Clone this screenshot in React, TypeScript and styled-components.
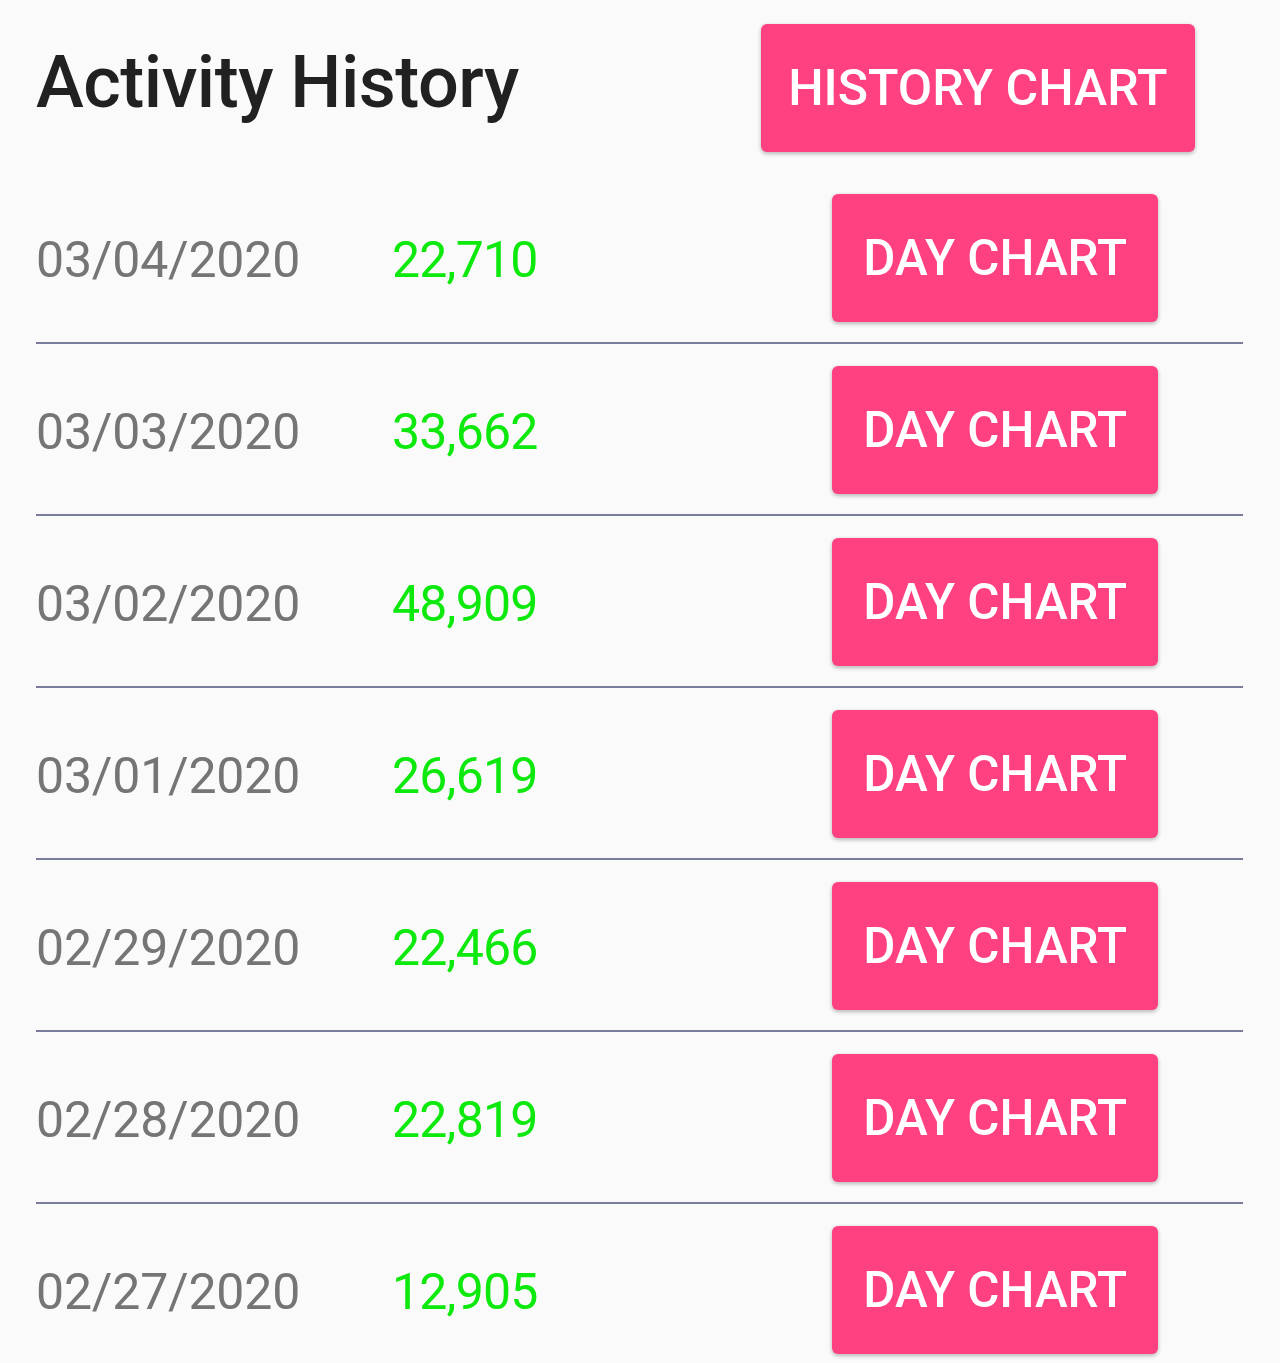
import styled, { createGlobalStyle } from 'styled-components';

const GlobalStyle = createGlobalStyle`
  html, body {
    margin: 0;
    padding: 0;
    background: #fafafa;
  }
  body {
    font-family: Roboto, "Noto Sans", sans-serif;
  }
`;

const entries = [
  { date: '03/04/2020', steps: '22,710' },
  { date: '03/03/2020', steps: '33,662' },
  { date: '03/02/2020', steps: '48,909' },
  { date: '03/01/2020', steps: '26,619' },
  { date: '02/29/2020', steps: '22,466' },
  { date: '02/28/2020', steps: '22,819' },
  { date: '02/27/2020', steps: '12,905' },
];

export default function App() {
  return (
    <Page>
      <GlobalStyle />
      <Header>
        <Title>Activity History</Title>
        <ChartButton $offset={48} $size={50} $pad={27.5}>
          History Chart
        </ChartButton>
      </Header>
      {entries.map((entry, i) => (
        <Row key={entry.date} $last={i === entries.length - 1}>
          <DateText>{entry.date}</DateText>
          <Steps>{entry.steps}</Steps>
          <ChartButton $offset={85} $size={49.3} $pad={31}>
            Day Chart
          </ChartButton>
        </Row>
      ))}
    </Page>
  );
}

const Page = styled.div`
  width: 1280px;
  min-height: 1363px;
  padding: 0 37px 0 36px;
  box-sizing: border-box;
  background: #fafafa;
`;

const Header = styled.div`
  display: flex;
  align-items: center;
  justify-content: space-between;
  height: 172px;
  padding: 24px 0 21px;
  box-sizing: border-box;
`;

const Title = styled.h1`
  margin: -10px 0 0;
  font-size: 72px;
  font-weight: 500;
  color: #212121;
  letter-spacing: -0.5px;
`;

const ChartButton = styled.button<{ $offset: number; $size: number; $pad: number }>`
  height: 128px;
  margin-right: ${(p) => p.$offset}px;
  padding: 0 ${(p) => p.$pad}px;
  border: none;
  border-radius: 6px;
  background: #ff4081;
  color: #ffffff;
  font-family: Roboto, "Noto Sans", sans-serif;
  font-size: ${(p) => p.$size}px;
  font-weight: 500;
  text-transform: uppercase;
  box-shadow: 0 2px 4px rgba(0, 0, 0, 0.2), 0 1px 4px rgba(0, 0, 0, 0.1);
  cursor: pointer;
`;

const Row = styled.div<{ $last: boolean }>`
  display: grid;
  grid-template-columns: 356px 1fr auto;
  align-items: center;
  padding: 22px 0 20px;
  border-bottom: ${(p) => (p.$last ? 'none' : '2px solid #7a7c9e')};
`;

const DateText = styled.span`
  margin-top: 4px;
  font-size: 50px;
  letter-spacing: -0.2px;
  color: #757575;
`;

const Steps = styled.span`
  margin-top: 4px;
  font-size: 50px;
  letter-spacing: -0.8px;
  color: #0de80d;
`;
